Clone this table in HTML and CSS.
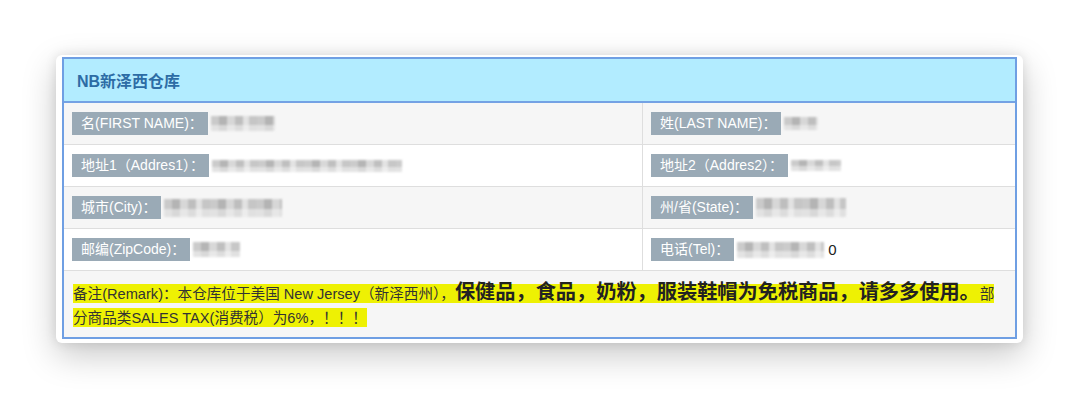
FILE: index.html
```html
<!DOCTYPE html>
<html lang="zh-CN">
<head>
<meta charset="utf-8">
<title>NB新泽西仓库</title>
<link rel="stylesheet" href="styles.css">
</head>
<body>
<div class="stage">
  <div class="card">
    <div class="panel">
      <div class="head">NB新泽西仓库</div>
      <div class="row odd">
        <div class="cell"><span class="label">名(FIRST NAME)：</span><span class="mosaic m-r1l"></span></div>
        <div class="cell right"><span class="label">姓(LAST NAME)：</span><span class="mosaic m-r1r"></span></div>
      </div>
      <div class="row">
        <div class="cell"><span class="label">地址1（Addres1）：</span><span class="mosaic m-r2l"></span></div>
        <div class="cell right"><span class="label">地址2（Addres2）：</span><span class="mosaic m-r2r"></span></div>
      </div>
      <div class="row odd">
        <div class="cell"><span class="label">城市(City)：</span><span class="mosaic m-r3l"></span></div>
        <div class="cell right"><span class="label">州/省(State)：</span><span class="mosaic m-r3r"></span></div>
      </div>
      <div class="row">
        <div class="cell"><span class="label">邮编(ZipCode)：</span><span class="mosaic m-r4l"></span></div>
        <div class="cell right"><span class="label">电话(Tel)：</span><span class="mosaic m-r4r"></span><span class="val">0</span></div>
      </div>
      <div class="remark odd">
        <span class="hl">备注(Remark)：本仓库位于美国 New Jersey（新泽西州），<b class="big">保健品，食品，奶粉，服装鞋帽为免税商品，请多多使用。</b>部<br>分商品类SALES TAX(消费税）为6%，！！！</span>
      </div>
    </div>
  </div>
</div>
</body>
</html>
```

FILE: styles.css
```css
html, body {
  margin: 0;
  padding: 0;
  background: #ffffff;
}

body {
  font-family: "Liberation Sans", "Noto Sans CJK SC", sans-serif;
  color: #333333;
  width: 1080px;
  height: 397px;
  overflow: hidden;
}

.stage {
  padding: 55px 0 0 56px;
}

.card {
  width: 955px;
  background: #ffffff;
  border-radius: 6px;
  padding: 2px 6px 4px 6px;
  box-shadow: 0 12px 34px rgba(0, 0, 0, 0.22), 0 0 12px rgba(0, 0, 0, 0.1);
}

.panel {
  border: 2px solid #6f9fe3;
  background: #ffffff;
}

.head {
  height: 42px;
  display: flex;
  align-items: center;
  padding-left: 13px;
  background: #b2ecff;
  border-bottom: 2px solid #74a2e4;
  color: #2d6ca5;
  font-weight: bold;
  font-size: 16px;
}

.row {
  display: grid;
  grid-template-columns: 578px 1fr;
  border-bottom: 1px solid #dedede;
  background: #ffffff;
}

.odd {
  background: #f6f6f6;
}

.row.odd {
  background: #f6f6f6;
}

.cell {
  display: flex;
  align-items: center;
  gap: 3px;
  padding: 9px 8px;
}

.cell.right {
  border-left: 1px solid #dedede;
}

.label {
  display: inline-block;
  height: 23px;
  line-height: 23px;
  padding: 0 5px 0 9px;
  background: #9aaab6;
  color: #ffffff;
  font-size: 14px;
  white-space: nowrap;
}

.val {
  font-size: 15px;
  color: #222222;
  margin-left: 1px;
}

.mosaic {
  display: inline-block;
  background-image:
    linear-gradient(180deg, rgba(255, 255, 255, 0) 0 58%, rgba(246, 246, 246, 0.55) 58% 100%),
    repeating-linear-gradient(90deg, #c6c6c6 0 8px, #adadad 8px 16px, #d4d4d4 16px 24px, #b9b9b9 24px 32px, #e0e0e0 32px 38px, #c1c1c1 38px 46px);
  filter: blur(1px);
  opacity: 0.9;
}

.m-r1l { width: 64px; height: 15px; }
.m-r1r { width: 34px; height: 13px; }
.m-r2l { width: 190px; height: 12px; }
.m-r2r { width: 50px; height: 11px; }
.m-r3l { width: 118px; height: 18px; }
.m-r3r { width: 90px; height: 19px; }
.m-r4l { width: 47px; height: 15px; }
.m-r4r { width: 87px; height: 16px; }

.remark {
  padding: 8px 9px 7px 9px;
  line-height: 24px;
  font-size: 14.6px;
}

.hl {
  background: #eef103;
  padding: 2px 0 1px 0;
  color: #333333;
}

.big {
  font-family: "Noto Sans CJK SC", sans-serif;
  font-weight: bold;
  font-size: 20.2px;
  color: #222222;
}
```
